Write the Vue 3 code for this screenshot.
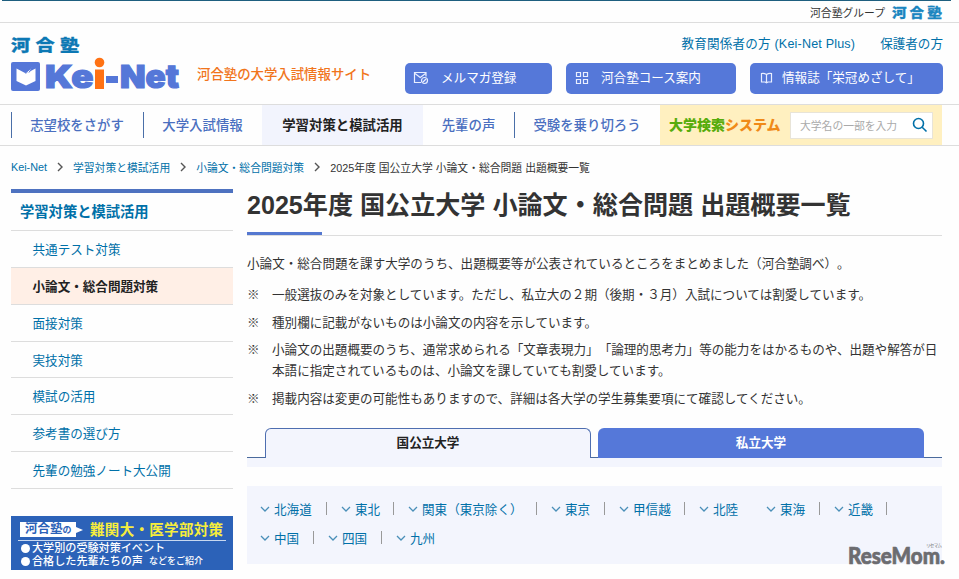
<template>
  <div class="page">
    <div class="top-bar">
      <span class="top-label">河合塾グループ</span>
      <svg class="top-logo" width="51" height="18" viewBox="0 0 51 18">
        <text transform="scale(1.12 1)" y="14">河合塾</text>
      </svg>
    </div>

    <header class="header">
      <div class="brand">
        <svg class="logo" width="170" height="60" viewBox="0 0 170 60">
          <text class="logo-jp" transform="scale(1.2 1)" y="20">河合塾</text>
          <rect x="0" y="31" width="29" height="29" rx="2" fill="#5577d8" />
          <path d="M5.500 37.500L15 42.500L24.500 37.500V50L15 54.500L5.500 50Z" fill="#fff" />
          <path d="M14.500 42L21.500 36L18 41.500" fill="#fff" stroke="#5577d8" stroke-width="1" />
          <text class="logo-en" x="34" y="57" textLength="48.500" lengthAdjust="spacingAndGlyphs">Ke</text>
          <circle cx="88.500" cy="31.500" r="4.800" fill="#ff7214" />
          <path d="M84 38.500H93V58H84Z" fill="#ff7214" />
          <path d="M95 45H107V52H95Z" fill="#5577d8" />
          <text class="logo-en" x="109" y="57" textLength="59" lengthAdjust="spacingAndGlyphs">Net</text>
        </svg>
        <p class="catch">河合塾の大学入試情報サイト</p>
      </div>
      <div class="header-right">
        <div class="audience">
          <a class="plus">教育関係者の方 (Kei-Net Plus)</a>
          <a>保護者の方</a>
        </div>
        <div class="buttons">
          <a class="btn btn-mail">
            <svg width="16" height="14" viewBox="0 0 16 14">
              <path d="M8 11.500H1.500V1.500H13V5.500M2 2.500L7.200 6.500L12.500 2.500" />
              <circle cx="11.500" cy="9.500" r="3" />
              <path d="M10 11L13 8" />
            </svg>
            <span>メルマガ登録</span>
          </a>
          <a class="btn btn-course">
            <svg width="14" height="14" viewBox="0 0 14 14">
              <path d="M1.500 1.500h4v4h-4zM8.500 1.500h4v4h-4zM1.500 8.500h4v4h-4zM8.500 8.500h4v4h-4z" />
            </svg>
            <span>河合塾コース案内</span>
          </a>
          <a class="btn btn-book">
            <svg width="13" height="12" viewBox="0 0 13 12">
              <path d="M6.500 2.500Q4 .8 1.500 1.500V10H5L6.500 10.800L8 10H11.500V1.500Q9 .8 6.500 2.500V10.500" />
            </svg>
            <span>情報誌「栄冠めざして」</span>
          </a>
        </div>
      </div>
    </header>

    <nav class="nav">
      <a
        v-for="item in navItems"
        :key="item.label"
        class="nav-item"
        :class="[item.size, { active: item.active }]"
      >{{ item.label }}</a>
      <div class="search">
        <span class="search-title">大学検索<em>システム</em></span>
        <div class="search-box">
          <span>大学名の一部を入力</span>
          <svg width="16" height="16" viewBox="0 0 16 16">
            <circle cx="6.500" cy="6.500" r="5" />
            <path d="M10.200 10.200L14.500 14.500" />
          </svg>
        </div>
      </div>
    </nav>

    <div class="breadcrumb">
      <template v-for="(crumb, i) in crumbs" :key="crumb">
        <svg v-if="i" width="6" height="10" viewBox="0 0 6 10"><path d="M1 1L5 5L1 9" /></svg>
        <span :class="{ current: i === crumbs.length - 1 }">{{ crumb }}</span>
      </template>
    </div>

    <div class="columns">
      <aside class="sidebar">
        <h2>学習対策と模試活用</h2>
        <ul>
          <li v-for="item in sideItems" :key="item" :class="{ active: item === activeSide }">{{ item }}</li>
        </ul>
        <div class="banner">
          <div class="banner-top">
            <span class="banner-tag">河合塾<small>の</small></span>
            <svg class="banner-title" width="134" height="18" viewBox="0 0 134 18">
              <text x="0" y="14" textLength="133">難関大・医学部対策</text>
            </svg>
          </div>
          <p><i></i>大学別の受験対策イベント</p>
          <p><i></i>合格した先輩たちの声<small>などをご紹介</small></p>
        </div>
      </aside>

      <main class="main">
        <h1>2025年度 国公立大学 小論文・総合問題 出題概要一覧</h1>
        <p class="intro">小論文・総合問題を課す大学のうち、出題概要等が公表されているところをまとめました（河合塾調べ）。</p>
        <ul class="notes">
          <li v-for="note in notes" :key="note[0]">
            <span class="mark">※</span>
            <span><template v-for="(line, i) in note" :key="i"><br v-if="i" />{{ line }}</template></span>
          </li>
        </ul>
        <div class="tabs">
          <div class="tab active">国公立大学</div>
          <div class="tab">私立大学</div>
        </div>
        <div class="tab-foot"></div>
        <div class="areas">
          <div v-for="(row, r) in areas" :key="r" class="area-row">
            <span
              v-for="area in row"
              :key="area.name"
              class="area"
              :class="{ line: area.line }"
              :style="{ width: area.width + 'px' }"
            >
              <svg width="10" height="6" viewBox="0 0 10 6"><path d="M1 1L5 5L9 1" /></svg>
              <a>{{ area.name }}</a>
            </span>
          </div>
        </div>
      </main>
    </div>

    <svg class="watermark" width="104" height="38" viewBox="0 0 104 38">
      <text class="wm-ruby" x="79" y="8" textLength="16">リセマム</text>
      <text class="wm" x="1" y="25" textLength="97" lengthAdjust="spacingAndGlyphs">ReseMom.</text>
    </svg>
  </div>
</template>

<script setup>
const navItems = [
  { label: "志望校をさがす", size: "nav-search" },
  { label: "大学入試情報", size: "nav-info" },
  { label: "学習対策と模試活用", size: "nav-study", active: true },
  { label: "先輩の声", size: "nav-voice" },
  { label: "受験を乗り切ろう", size: "nav-support" },
];

const crumbs = [
  "Kei-Net",
  "学習対策と模試活用",
  "小論文・総合問題対策",
  "2025年度 国公立大学 小論文・総合問題 出題概要一覧",
];

const activeSide = "小論文・総合問題対策";
const sideItems = [
  "共通テスト対策",
  "小論文・総合問題対策",
  "面接対策",
  "実技対策",
  "模試の活用",
  "参考書の選び方",
  "先輩の勉強ノート大公開",
];

const notes = [
  ["一般選抜のみを対象としています。ただし、私立大の２期（後期・３月）入試については割愛しています。"],
  ["種別欄に記載がないものは小論文の内容を示しています。"],
  [
    "小論文の出題概要のうち、通常求められる「文章表現力」「論理的思考力」等の能力をはかるものや、出題や解答が日",
    "本語に指定されているものは、小論文を課していても割愛しています。",
  ],
  ["掲載内容は変更の可能性もありますので、詳細は各大学の学生募集要項にて確認してください。"],
];

// width is the step from one entry to the next
const areas = [
  [
    { name: "北海道", width: 81, line: true },
    { name: "東北", width: 67, line: true },
    { name: "関東（東京除く）", width: 143, line: true },
    { name: "東京", width: 68, line: true },
    { name: "甲信越", width: 80, line: true },
    { name: "北陸", width: 67 },
    { name: "東海", width: 68, line: true },
    { name: "近畿", width: 67, line: true },
  ],
  [
    { name: "中国", width: 68, line: true },
    { name: "四国", width: 68, line: true },
    { name: "九州", width: 67 },
  ],
];
</script>

<style>
body {
  margin: 0;
  background: #fefefe;
}
</style>

<style scoped>
.page {
  position: relative;
  width: 959px;
  height: 579px;
  overflow: hidden;
  box-sizing: border-box;
  color: #333;
  background: #fefefe;
  font-family: "Liberation Sans", "Noto Sans CJK JP", sans-serif;
  font-size: 12.57px;
  text-spacing-trim: space-all;
}

.page * {
  box-sizing: border-box;
}

h1,
h2,
p,
ul {
  margin: 0;
  padding: 0;
}

ul {
  list-style: none;
}

svg {
  flex: none;
  overflow: visible;
  fill: none;
}

/* Top bar */
.top-bar {
  display: flex;
  justify-content: flex-end;
  align-items: center;
  gap: 7px;
  height: 23px;
  padding: 2px 16px 0 0;
  border-bottom: 1px solid #ddd;
  background: linear-gradient(#1e5f7f, #1e5f7f) 2px 0 / 949px 1px no-repeat;
}

.top-label {
  font-size: 10.8px;
}

.top-logo text {
  fill: #1b86c0;
  stroke: #1b86c0;
  stroke-width: 0.3px;
  font-size: 13px;
  font-weight: 900;
  letter-spacing: 2.7px;
}

/* Header */
.header {
  display: flex;
  justify-content: space-between;
  height: 82px;
  padding: 0 16px 0 11px;
  border-bottom: 1px solid #ddd;
}

.brand {
  display: flex;
  gap: 16px;
}

.logo {
  margin-top: 8px;
}

.logo-jp {
  fill: #0c78b4;
  stroke: #0c78b4;
  stroke-width: 0.3px;
  font-size: 16px;
  font-weight: 900;
  letter-spacing: 4.4px;
}

.logo-en {
  fill: #5577d8;
  stroke: #5577d8;
  stroke-width: 1.2px;
  font-family: "Inter", sans-serif;
  font-size: 32px;
  font-weight: 900;
}

.catch {
  margin-top: 42px;
  color: #f1751c;
  font-size: 13.4px;
  font-weight: 500;
  line-height: 20px;
}

.header-right {
  display: flex;
  flex-direction: column;
  align-items: flex-end;
}

.audience {
  display: flex;
  gap: 25px;
  height: 40px;
  padding-top: 11px;
  color: #0070a8;
  line-height: 20px;
}

.plus {
  letter-spacing: 0.18px;
}

.buttons {
  display: flex;
  gap: 14px;
}

.btn {
  display: flex;
  align-items: center;
  height: 31px;
  padding-bottom: 1px;
  border-radius: 5px;
  background: #5578d9;
  color: #fff;
  line-height: 20px;
  white-space: nowrap;
}

.btn svg {
  stroke: #e8eeff;
  stroke-width: 1.2;
}

.btn-mail {
  width: 147px;
  padding-left: 8px;
  gap: 12px;
}

.btn-course {
  width: 170px;
  padding-left: 9px;
  gap: 12px;
}

.btn-book {
  width: 193px;
  padding-left: 10px;
  gap: 9px;
}

/* Navigation */
.nav {
  display: flex;
  height: 41px;
  padding-left: 11px;
  border-bottom: 1px solid #ddd;
}

.nav-item {
  display: flex;
  align-items: center;
  justify-content: center;
  padding-bottom: 2px;
  color: #4a6fc0;
  font-size: 13.4px;
  font-weight: 500;
  background: linear-gradient(#4a6fa8, #4a6fa8) 0 7px / 1px 26px no-repeat;
}

.nav-item.active {
  background: #f2f4fd;
  color: #222;
  font-weight: 700;
}

.nav-search {
  width: 132px;
}

.nav-info {
  width: 119px;
}

.nav-study {
  width: 161px;
}

.nav-voice {
  width: 91px;
  background: none;
}

.nav-support {
  width: 146px;
}

.search {
  display: flex;
  align-items: center;
  gap: 10px;
  width: 282px;
  padding-left: 9px;
  background: #fff0c0;
}

.search-title {
  width: 111px;
  padding-bottom: 2px;
  color: #57ac0c;
  font-size: 14px;
  font-weight: 900;
  white-space: nowrap;
}

.search-title em {
  color: #f08a18;
  font-style: normal;
}

.search-box {
  display: flex;
  align-items: center;
  justify-content: space-between;
  width: 143px;
  height: 27px;
  padding: 0 4px 0 9px;
  border: 1px solid #e8e4d8;
  background: #fff;
  color: #aaa;
  font-size: 10.8px;
}

.search-box svg {
  stroke: #0070a8;
  stroke-width: 1.6;
}

/* Breadcrumb */
.breadcrumb {
  display: flex;
  align-items: center;
  gap: 10px;
  height: 41px;
  margin-bottom: 2px;
  padding-left: 11px;
  color: #0070a8;
  font-size: 10.8px;
  white-space: nowrap;
}

.breadcrumb svg {
  stroke: #555;
  stroke-width: 1.4;
}

.breadcrumb .current {
  color: #333;
}

/* Columns */
.columns {
  display: flex;
  gap: 14px;
  padding-left: 11px;
}

.sidebar {
  width: 222px;
  border-top: 4px solid #4e72c0;
}

.sidebar h2 {
  height: 38px;
  padding-left: 9px;
  border-bottom: 1px solid #ddd;
  color: #0070a8;
  font-size: 14.3px;
  font-weight: 700;
  line-height: 38px;
}

.sidebar li {
  height: 36.85px;
  padding-left: 21.5px;
  border-bottom: 1px solid #ddd;
  color: #0070a8;
  line-height: 39px;
}

.sidebar li.active {
  background: #ffefe6;
  color: #222;
  font-weight: 700;
}

.banner {
  height: 54px;
  margin-top: 27px;
  padding: 4px 7px 0;
  background: #2c62b8;
  color: #fff;
}

.banner-top {
  display: flex;
  align-items: center;
  gap: 14px;
  height: 21px;
  margin-bottom: 1px;
  padding-left: 2px;
  border-bottom: 1px solid #c8d8f0;
}

.banner-tag {
  position: relative;
  width: 56px;
  height: 15px;
  padding-left: 5px;
  background: #fff;
  color: #2c62b8;
  font-size: 12.5px;
  font-weight: 700;
  line-height: 15px;
  white-space: nowrap;
}

.banner-tag::after {
  position: absolute;
  top: 5px;
  right: -7px;
  border: 3px solid transparent;
  border-right: 0;
  border-left: 7px solid #fff;
  content: "";
}

.banner small {
  font-size: 9px;
}

.banner-title text {
  fill: #f6ed3c;
  font-size: 14.5px;
  font-weight: 700;
}

.banner p {
  display: flex;
  align-items: center;
  height: 13px;
  padding-left: 3px;
  font-size: 11.1px;
  font-weight: 500;
  line-height: 13px;
  white-space: nowrap;
}

.banner p small {
  margin-left: 6px;
}

.banner i {
  width: 9px;
  height: 9px;
  margin-right: 2px;
  border-radius: 50%;
  background: #fff;
}

/* Main */
.main {
  width: 695px;
}

h1 {
  height: 47px;
  border-bottom: 1px solid #ddd;
  background: linear-gradient(#5578d0, #5578d0) 0 100% / 75px 3px no-repeat;
  font-size: 25.1px;
  font-weight: 700;
  line-height: 33px;
  white-space: nowrap;
}

.intro {
  margin-top: 18px;
  line-height: 21px;
  white-space: nowrap;
}

.notes {
  display: flex;
  flex-direction: column;
  gap: 6.5px;
  margin-top: 10px;
}

.notes li {
  display: flex;
  line-height: 21px;
  white-space: nowrap;
}

.mark {
  width: 25px;
}

.tabs {
  display: flex;
  gap: 7px;
  height: 30px;
  margin-top: 18px;
  padding-left: 18px;
  background: linear-gradient(#4a6a9c, #4a6a9c) 0 100% / 100% 1px no-repeat;
}

.tab {
  width: 326px;
  border-radius: 6px 6px 0 0;
  background: #5578d9;
  color: #fff;
  font-weight: 700;
  line-height: 30px;
  text-align: center;
}

.tab.active {
  border: 1px solid #4e6eb0;
  border-bottom: 0;
  background: #f3f5fd;
  color: #222;
  line-height: 28px;
}

.tab-foot {
  height: 9px;
  background: #f3f5fd;
}

.areas {
  height: 78px;
  margin-top: 19px;
  padding: 9px 0 0 13px;
  background: #f3f5fd;
}

.area-row {
  display: flex;
  height: 29px;
}

.area {
  display: flex;
  align-items: center;
  gap: 4px;
  height: 28px;
  color: #0070a8;
  white-space: nowrap;
}

.area.line {
  background: linear-gradient(#999, #999) calc(100% - 14px) 50% / 1px 13px no-repeat;
}

.area svg {
  stroke: #4a8fb8;
  stroke-width: 1.3;
}

/* Overlaid mark */
.watermark {
  position: absolute;
  top: 539px;
  left: 847px;
}

.wm {
  fill: #6c6c70;
  stroke: #6c6c70;
  stroke-width: 0.7px;
  font-family: "Lato", sans-serif;
  font-size: 23.5px;
  font-weight: 900;
}

.wm-ruby {
  fill: #777;
  font-size: 4.5px;
}
</style>
